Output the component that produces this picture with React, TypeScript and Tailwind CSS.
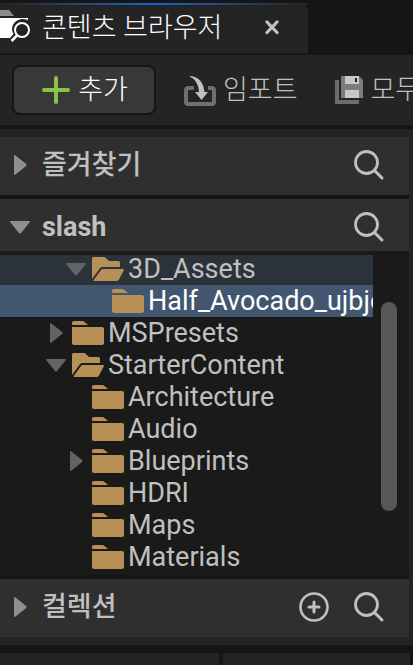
import type { ReactNode } from "react";

function SearchIcon() {
  return (
    <svg width="32" height="32" viewBox="0 0 32 32" fill="none" stroke="#c0c0c0" aria-hidden="true">
      <circle cx="13.5" cy="13.5" r="11" strokeWidth="2.8" />
      <path d="M21.5 21.5L29 29" strokeWidth="3" strokeLinecap="round" />
    </svg>
  );
}

function AddCircleIcon() {
  return (
    <svg width="30" height="30" viewBox="0 0 30 30" fill="none" stroke="#c0c0c0" aria-hidden="true">
      <circle cx="15" cy="15" r="13.5" strokeWidth="2.6" />
      <path d="M15 10V20M10 15H20" strokeWidth="3" strokeLinecap="round" />
    </svg>
  );
}

function Arrow({ open, color }: { open: boolean; color: string }) {
  return (
    <svg width="20" height="20" viewBox="0 0 20 20" fill={color} aria-hidden="true" className="shrink-0">
      {open ? (
        <path d="M1 4H19Q20.600 4 19.500 5.500L11.300 15.800Q10 17.200 8.700 15.800L.5 5.500Q-.6 4 1 4Z" />
      ) : (
        <path d="M4 1Q4-.6 5.500 .5L15.800 8.700Q17.200 10 15.800 11.300L5.500 19.500Q4 20.600 4 19Z" />
      )}
    </svg>
  );
}

function FolderIcon({ open }: { open: boolean }) {
  return (
    <svg width="32" height="24" viewBox="0 0 32 24" fill="#b69056" aria-hidden="true" className="shrink-0">
      {open ? (
        <>
          <path d="M0 1.500Q0 0 1.500 0H12Q13 0 13.700 .7L17 4H26.500Q28 4 28 5.500V10H10.500Q9 10 8 11.300L0 22Z" />
          <path d="M11 12H31Q32.500 12 31.700 13.500L27 22.500Q26.200 24 24.500 24H2.500Q1 24 2 22.500L9 13Q9.700 12 11 12Z" />
        </>
      ) : (
        <>
          <path d="M0 4V2Q0 0 2 0H10.500Q11.500 0 12.300 .7L16 4Z" />
          <path d="M0 6H30Q32 6 32 8V22Q32 24 30 24H2Q0 24 0 22Z" />
        </>
      )}
    </svg>
  );
}

function BrowserIcon() {
  return (
    <svg width="30" height="32" viewBox="0 0 30 32" fill="none" aria-hidden="true" className="mb-1 shrink-0">
      <path d="M0 0H9L14 6H0Z" fill="#8c8c8c" />
      <path d="M0 8H28V10Q20 7 14.500 12.500Q10 18 13.500 24L10 28H0Z" fill="#fff" />
      <circle cx="22" cy="20" r="7" stroke="#fff" strokeWidth="2" />
      <path d="M17 25.500L11.500 31" stroke="#fff" strokeWidth="2.600" />
    </svg>
  );
}

function ImportIcon() {
  return (
    <svg width="32" height="32" viewBox="0 0 32 32" fill="none" aria-hidden="true" className="shrink-0">
      <path d="M10 14H4.500Q2 14 2 16.500V27.500Q2 30 4.500 30H27.500Q30 30 30 27.500V16.500Q30 14 27.500 14H24" stroke="#707070" strokeWidth="4" />
      <path d="M5 2Q19 2.500 20.500 18H24L17.500 26L11 18H15Q14.500 6.500 5 2Z" fill="#c0c0c0" />
    </svg>
  );
}

function SaveAllIcon() {
  return (
    <svg width="28" height="28" viewBox="0 0 28 28" aria-hidden="true" className="shrink-0">
      <path d="M0 4H4V24H24V28H0Z" fill="#6c6c6c" />
      <path d="M6 0H24L28 4V22H6Z" fill="#7c7c7c" />
      <path d="M10 0H24V8H10ZM10 14H24V22H10Z" fill="#c8c8c8" />
      <path d="M20 2H22V6H20Z" fill="#222" />
    </svg>
  );
}

function Section({ title, open, children }: { title: string; open: boolean; children: ReactNode }) {
  return (
    <header
      className={`flex items-center bg-[#2f2f2f] pl-2.5 pr-6 text-[#c0c0c0] ${open ? "h-[52px] pt-1" : "h-[58px] pb-0.5"}`}
    >
      <button type="button" aria-expanded={open} className="flex items-center gap-3">
        <Arrow open={open} color="#8f8f8f" />
        <span className={open ? "font-bold" : "font-medium"}>{title}</span>
      </button>
      <div className="ml-auto flex items-center gap-6">{children}</div>
    </header>
  );
}

type Item = { name: string; depth: number; expanded?: boolean; tone?: "parent" | "selected" };

const items: Item[] = [
  { name: "3D_Assets", depth: 1, expanded: true, tone: "parent" },
  { name: "Half_Avocado_ujbjc", depth: 2, tone: "selected" },
  { name: "MSPresets", depth: 0, expanded: false },
  { name: "StarterContent", depth: 0, expanded: true },
  { name: "Architecture", depth: 1 },
  { name: "Audio", depth: 1 },
  { name: "Blueprints", depth: 1, expanded: false },
  { name: "HDRI", depth: 1 },
  { name: "Maps", depth: 1 },
  { name: "Materials", depth: 1 },
];

const indents = ["pl-[46px]", "pl-[66px]", "pl-[86px]"];
const tones = {
  parent: "bg-[#2c323a] text-[#c0c0c0]",
  selected: "bg-[#42576f] text-white",
  none: "text-[#c0c0c0]",
};

function TreeRow({ item }: { item: Item }) {
  const hasArrow = item.expanded !== undefined;
  return (
    <li
      role="treeitem"
      aria-selected={item.tone === "selected"}
      className={`flex h-8 items-center overflow-hidden whitespace-nowrap ${indents[item.depth]} ${tones[item.tone ?? "none"]}`}
    >
      <span className="mr-1.5 flex w-5 shrink-0">
        {hasArrow && <Arrow open={item.expanded === true} color="#636363" />}
      </span>
      <FolderIcon open={item.expanded === true} />
      <span className="ml-1">{item.name}</span>
    </li>
  );
}

export default function App() {
  return (
    <main className="overflow-hidden bg-[#151515] font-[Roboto,'Noto_Sans_CJK_KR',sans-serif] text-[27px] leading-8">
      <div className="flex pt-[3px]">
        <div className="relative flex h-[50px] w-[308px] items-center rounded-tr-lg bg-[#242424] text-white">
          <div className="absolute inset-x-0 top-0 h-0.5 bg-linear-to-r from-[#242424] via-[#0f66c8] to-[#242424]" />
          <BrowserIcon />
          <span className="ml-3 whitespace-nowrap font-light">콘텐츠 브라우저</span>
          <button type="button" aria-label="닫기" className="ml-auto mr-7">
            <svg width="16" height="16" viewBox="0 0 16 16" stroke="#c4c4c4" strokeWidth="3.200" strokeLinecap="round" aria-hidden="true">
              <path d="M3 2L13 12.500M13 2L3 12.500" />
            </svg>
          </button>
        </div>
      </div>

      <div className="mt-0.5 flex h-[70px] items-center overflow-hidden whitespace-nowrap bg-[#242424] pl-3 font-light text-[#c0c0c0]">
        <button type="button" className="flex h-[50px] w-36 shrink-0 items-center justify-center gap-2 rounded-lg border-2 border-[#151515] bg-[#383838] pl-0.5 text-white">
          <svg width="28" height="28" viewBox="0 0 28 28" stroke="#8bc34a" strokeWidth="4" strokeLinecap="round" aria-hidden="true">
            <path d="M14 2V26M2 14H26" />
          </svg>
          추가
        </button>
        <button type="button" className="ml-7 flex shrink-0 items-center gap-[7px]">
          <ImportIcon />
          임포트
        </button>
        <button type="button" className="ml-[37px] flex shrink-0 items-center gap-2">
          <SaveAllIcon />
          모두
        </button>
      </div>

      <div className="mt-1 bg-[#242424] py-2 pr-1">
        <Section title="즐겨찾기" open={false}>
          <button type="button" aria-label="즐겨찾기 검색"><SearchIcon /></button>
        </Section>
        <div className="h-1 bg-[#151515]" />
        <Section title="slash" open>
          <button type="button" aria-label="slash 검색"><SearchIcon /></button>
        </Section>
        <div className="flex border-t-4 border-[#1a1a1a] bg-[#1a1a1a] pb-0.5">
          <div className="min-w-0 flex-1 overflow-hidden">
            <ul role="tree" aria-label="slash" className="-mt-0.5">
              {items.map((item) => (
                <TreeRow key={item.name} item={item} />
              ))}
            </ul>
          </div>
          <div className="w-9 shrink-0 px-2 pt-[47px]">
            <div className="h-[209px] w-4 rounded-full bg-[#575757]" />
          </div>
        </div>
        <div className="h-1 bg-[#151515]" />
        <Section title="컬렉션" open={false}>
          <button type="button" aria-label="컬렉션 추가"><AddCircleIcon /></button>
          <button type="button" aria-label="컬렉션 검색"><SearchIcon /></button>
        </Section>
      </div>

      <div className="mt-2 flex h-3 gap-1 pr-[3px]">
        <div className="w-[219px] bg-[#242424]" />
        <div className="flex-1 bg-[#242424]" />
      </div>
    </main>
  );
}
